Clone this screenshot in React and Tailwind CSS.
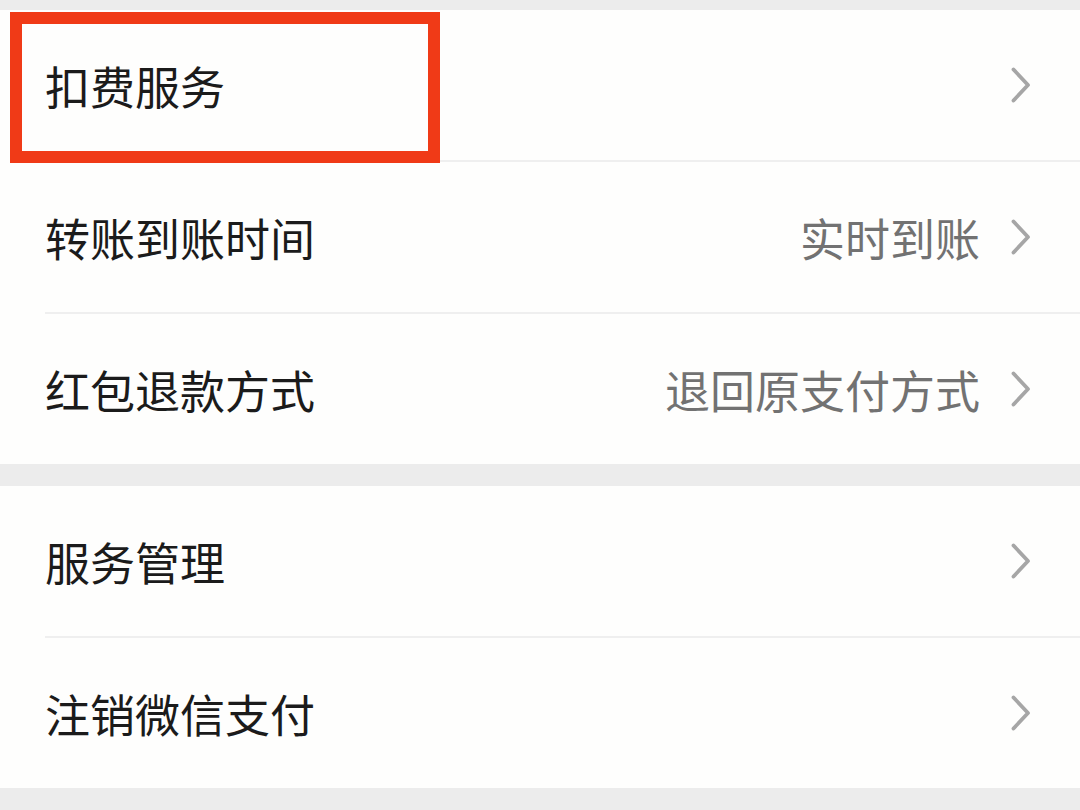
const FONT = { fontFamily: '"Noto Sans CJK SC", "Noto Sans", sans-serif' };

function Chevron() {
  return (
    <svg width="22" height="36" viewBox="0 0 22 36" fill="none" className="shrink-0">
      <path d="M3.5 2.5 L18 18 L3.5 33.5" stroke="#a6a6a6" strokeWidth="3.8" strokeLinecap="round" strokeLinejoin="round" />
    </svg>
  );
}

function Row({ label, value, divider, highlight }) {
  return (
    <div className="relative">
      <div className="flex h-[150px] items-center pl-[45px] pr-[48px]">
        <span className="flex-1 text-[45px] leading-none text-[#1b1b1b]">{label}</span>
        {value ? <span className="mr-[30px] text-[45px] leading-none text-[#727272]">{value}</span> : null}
        <Chevron />
      </div>
      {divider ? <div className="ml-[45px] h-[2px] bg-[#efefef]" /> : null}
      {highlight ? (
        <div className="absolute left-[10px] top-[2px] h-[151px] w-[430px] border-[12px] border-[#f03a17]" />
      ) : null}
    </div>
  );
}

export default function App() {
  return (
    <div className="h-[810px] w-[1080px] overflow-hidden bg-[#ececec]" style={FONT}>
      <div className="h-[10px]" />
      <section className="bg-[#fefefd]">
        <Row label="扣费服务" divider highlight />
        <Row label="转账到账时间" value="实时到账" divider />
        <Row label="红包退款方式" value="退回原支付方式" />
      </section>
      <div className="h-[22px]" />
      <section className="bg-[#fefefd]">
        <Row label="服务管理" divider />
        <Row label="注销微信支付" />
      </section>
    </div>
  );
}
